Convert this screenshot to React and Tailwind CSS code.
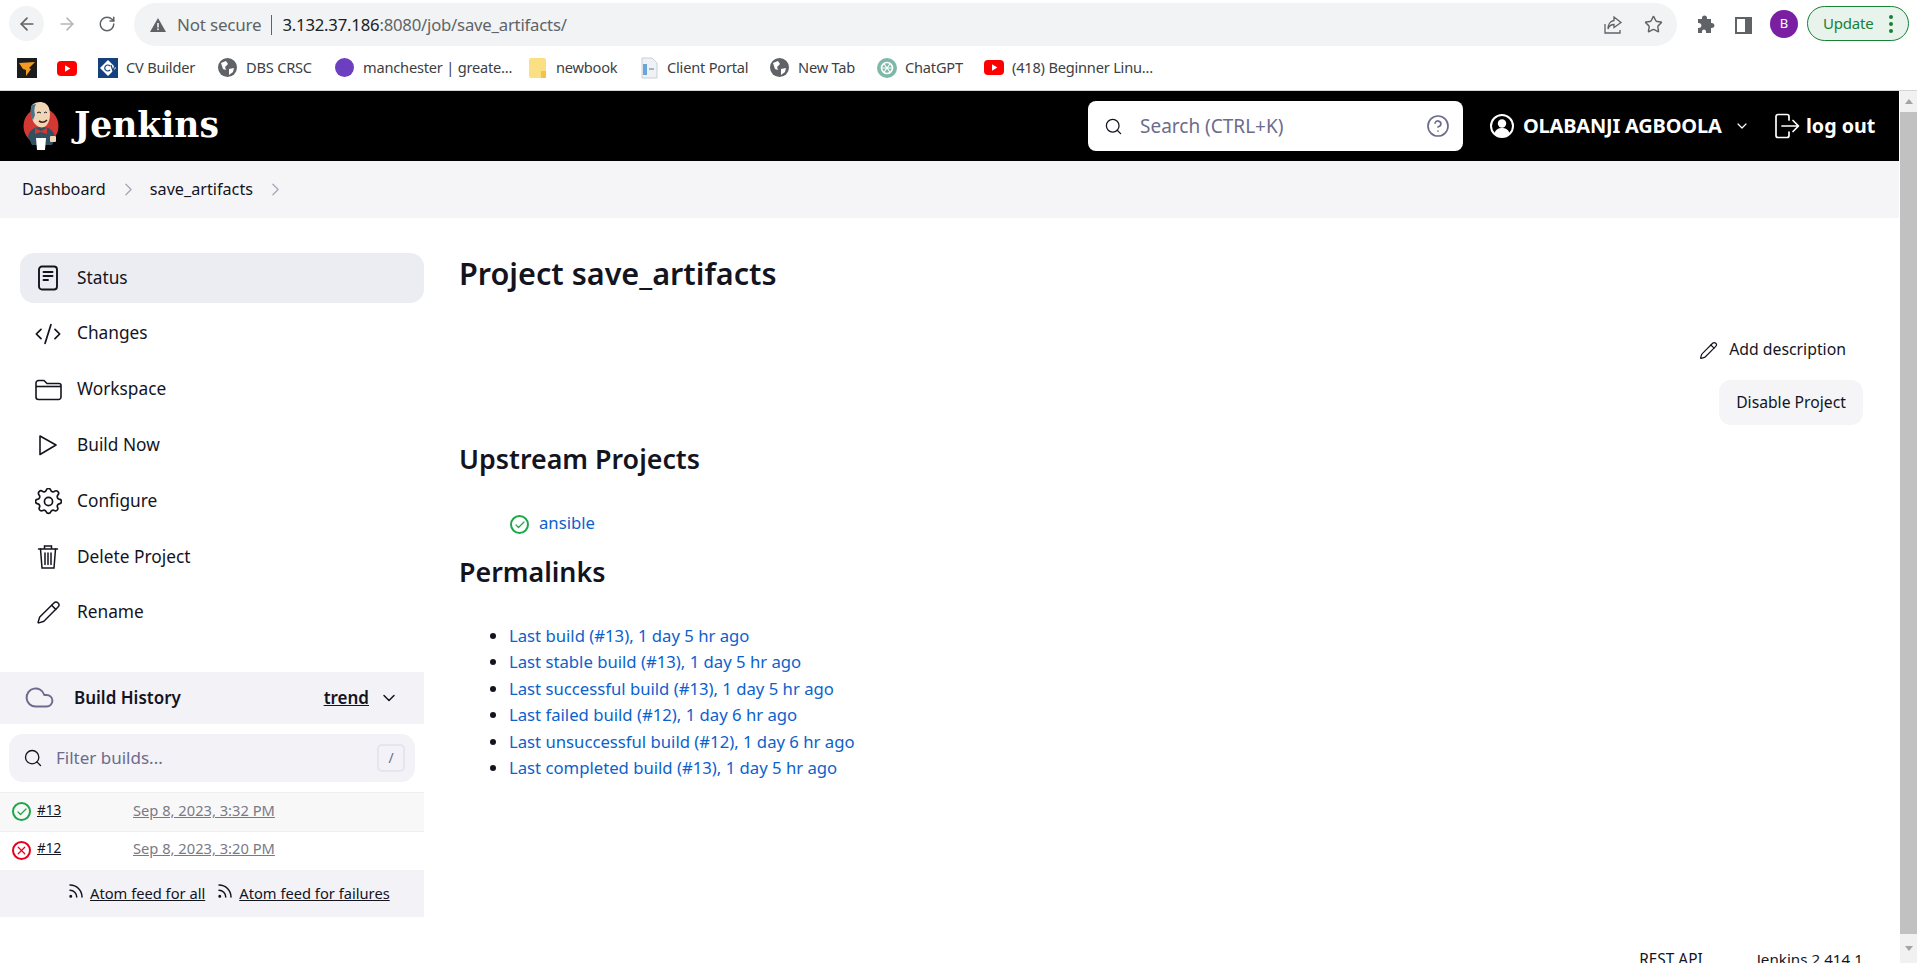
import { ArrowLeft, ArrowRight, RotateCw, Star, Search, ChevronDown, ChevronRight, Rss, Check, X, Pencil, Cloud, CodeXml, CircleHelp } from 'lucide-react';

const sans = 'font-["Noto_Sans",sans-serif]';

function JenkinsLogo() {
  return (
    <svg width="38" height="50" viewBox="0 0 38 50" className="shrink-0">
      <ellipse cx="19" cy="25" rx="17.5" ry="18" fill="#d33833" />
      <path d="M6 36 C7 29 12 26 19 26 C27 26 32 29 33 37 L30 44 H10 Z" fill="#335061" />
      <path d="M10 4 C15 -1 25 0 27 7 C29 13 28 21 24 25 C20 28 14 26 11 20 C9 15 8 8 10 4 Z" fill="#f0d6b7" />
      <path d="M10 4 C8 8 8 15 11 19 L13 14 C12 10 12 7 14 3 Z" fill="#49728b" />
      <path d="M15 12 q2 -2 4 0 M22 12 q2 -2 3 0" stroke="#1a1a1a" strokeWidth="1" fill="none" />
      <path d="M17 20 q4 3 8 -1" stroke="#49230f" strokeWidth="1.6" fill="none" />
      <path d="M13 27 L19 30 L25 27 L25 33 L19 31 L13 33 Z" fill="#d33833" />
      <path d="M14 37 H24 L23 49 H15 Z" fill="#fff" />
      <rect x="28" y="35" width="6" height="6" rx="1" fill="#f0d6b7" />
    </svg>
  );
}

function Bookmark({ icon, label, width }) {
  return (
    <div className={`flex items-center ${width}`}>
      <span className="flex w-[21px] shrink-0 justify-center">{icon}</span>
      <span className="ml-[8px] whitespace-nowrap text-[14.6px] tracking-[-0.2px] text-[#3c4043]">{label}</span>
    </div>
  );
}

function YoutubeIcon() {
  return (
    <svg width="20" height="15" viewBox="0 0 20 15">
      <rect width="20" height="15" rx="4" fill="#f00" />
      <path d="M8 4.2 L13.4 7.5 L8 10.8 Z" fill="#fff" />
    </svg>
  );
}

function GlobeIcon() {
  return (
    <svg width="19" height="19" viewBox="0 0 19 19">
      <circle cx="9.5" cy="9.5" r="9.5" fill="#5f6368" />
      <path d="M3 5 L8 3 L10 6 L7 9 L8 12 L5 11 Z M11 11 L16 10 L15 14 L11 17 Z" fill="#fff" />
    </svg>
  );
}

function BrowserBars() {
  return (
    <>
      <div className="flex h-[46px] shrink-0 items-start bg-white pt-[3px]">
        <div className="ml-[9px] mt-[3px] flex h-[35px] w-[35px] items-center justify-center rounded-full bg-[#f1f3f4]">
          <ArrowLeft size={20} strokeWidth={2} className="text-[#5f6368]" />
        </div>
        <div className="ml-[5px] mt-[3px] flex h-[35px] w-[35px] items-center justify-center">
          <ArrowRight size={20} strokeWidth={2} className="text-[#b5b7b9]" />
        </div>
        <div className="ml-[5px] mt-[3px] flex h-[35px] w-[35px] items-center justify-center">
          <RotateCw size={18} strokeWidth={2} className="text-[#5f6368]" />
        </div>
        <div className="ml-[10px] flex h-[43px] w-[1543px] items-center rounded-full bg-[#f1f3f4] pl-[16px] pr-[14px]">
          <svg width="16" height="14" viewBox="0 0 16 14"><path d="M8 0 L16 14 H0 Z" fill="#5f6368" /><rect x="7.2" y="5" width="1.6" height="4.5" fill="#f1f3f4" /><rect x="7.2" y="10.5" width="1.6" height="1.6" fill="#f1f3f4" /></svg>
          <span className="ml-[11px] whitespace-nowrap text-[17px] tracking-[-0.2px] text-[#5f6368]">Not secure</span>
          <span className="ml-[10px] h-[20px] w-px bg-[#5f6368]" />
          <span className="ml-[10px] whitespace-nowrap text-[16.7px] tracking-[-0.2px] text-[#202124]">
            3.132.37.186<span className="text-[#5f6368]">:8080/job/save_artifacts/</span>
          </span>
          <span className="flex-1" />
          <svg width="20" height="20" viewBox="0 0 20 20" fill="none" stroke="#5f6368" strokeWidth="1.3">
            <path d="M2 9 V18 H17 V15" />
            <path d="M11 2 L18 7.5 L11 12.5 V9.5 C8 9.5 6 11 5 14 C5 10 7 6 11 5.5 Z" />
          </svg>
          <Star size={19} strokeWidth={1.8} className="ml-[21px] text-[#5f6368]" />
        </div>
        <svg width="20" height="20" viewBox="0 0 20 20" className="ml-[18px] mt-[11px]" fill="#5f6368">
          <path d="M3 5 H7 V4 a2.5 2.5 0 0 1 5 0 V5 H16 V9 H17 a2.5 2.5 0 0 1 0 5 H16 V19 H11 V17.5 a2 2 0 0 0 -4 0 V19 H3 V14 H4 a2.5 2.5 0 0 0 0 -5 H3 Z" />
        </svg>
        <div className="ml-[20px] mt-[14px] h-[17px] w-[17px] border-[2.5px] border-[#5f6368] border-r-[7px]" />
        <div className="ml-[18px] mt-[7px] flex h-[28px] w-[28px] items-center justify-center rounded-full bg-[#7b1fa2] text-[13px] text-white">B</div>
        <div className="ml-[9px] mt-[3px] flex h-[35px] w-[102px] items-center rounded-full border border-[#188038] bg-[#e8f3ec] pl-[15px]">
          <span className="text-[15px] tracking-[-0.2px] text-[#188038]">Update</span>
          <span className="ml-[15px] flex flex-col gap-[3px]">
            <span className="h-[4px] w-[4px] rounded-full bg-[#188038]" />
            <span className="h-[4px] w-[4px] rounded-full bg-[#188038]" />
            <span className="h-[4px] w-[4px] rounded-full bg-[#188038]" />
          </span>
        </div>
      </div>
      <div className="flex h-[45px] shrink-0 items-center border-b border-[#d5d5d5] bg-white pl-[17px]">
        <div className="flex w-[40px] items-center">
          <svg width="20" height="20" viewBox="0 0 20 20"><rect width="20" height="20" fill="#1c1c1c" /><path d="M2 5 L18 4 L12 10 L14 11 L9 18 L9 12 L6 11 Z" fill="#f59a23" /></svg>
        </div>
        <div className="flex w-[40px] items-center"><YoutubeIcon /></div>
        <Bookmark
          width="w-[120px]"
          label="CV Builder"
          icon={
            <svg width="20" height="20" viewBox="0 0 20 20">
              <rect width="20" height="20" fill="#15407e" />
              <path d="M10 2 L18 10 L10 18 L2 10 Z" fill="#fff" />
              <path d="M12 8 a3 3 0 1 0 0 4 M13 7 L15 13 L17 7" stroke="#15407e" fill="none" strokeWidth="1.2" />
            </svg>
          }
        />
        <Bookmark width="w-[117px]" label="DBS CRSC" icon={<GlobeIcon />} />
        <Bookmark width="w-[193px]" label="manchester | greate..." icon={<span className="h-[19px] w-[19px] rounded-full bg-[#6c3fc0]" />} />
        <Bookmark
          width="w-[111px]"
          label="newbook"
          icon={
            <svg width="17" height="20" viewBox="0 0 17 20">
              <rect width="17" height="20" rx="2" fill="#fbe083" />
              <rect x="12" y="13" width="5" height="7" fill="#f4c542" />
            </svg>
          }
        />
        <Bookmark
          width="w-[131px]"
          label="Client Portal"
          icon={
            <svg width="20" height="22" viewBox="0 0 20 22">
              <path d="M3 1 H13 L18 6 V21 H3 Z" fill="#eef1f5" stroke="#c9ced6" />
              <rect x="4" y="7" width="4" height="11" fill="#6aa5da" />
              <rect x="10" y="11" width="5" height="2" fill="#a9b2bd" />
            </svg>
          }
        />
        <Bookmark width="w-[107px]" label="New Tab" icon={<GlobeIcon />} />
        <Bookmark
          width="w-[107px]"
          label="ChatGPT"
          icon={
            <svg width="20" height="20" viewBox="0 0 20 20" fill="none">
              <circle cx="10" cy="10" r="10" fill="#7fb8a8" />
              <circle cx="10" cy="10" r="5.5" stroke="#fff" strokeWidth="1.6" />
              <path d="M7 6 L13 14 M13 6 L7 14 M4.5 10 H15.5" stroke="#fff" strokeWidth="1.2" />
            </svg>
          }
        />
        <Bookmark width="w-[180px]" label="(418) Beginner Linu..." icon={<YoutubeIcon />} />
      </div>
    </>
  );
}

function Header() {
  return (
    <header className="flex h-[70px] shrink-0 items-center bg-black pl-[22px] text-white">
      <JenkinsLogo />
      <span className='-mt-[1px] ml-[14px] w-[146px] font-["DejaVu_Serif",serif] text-[34.5px] font-bold leading-none'>Jenkins</span>
      <div className="ml-[868px] flex h-[50px] w-[375px] items-center rounded-[8px] bg-white pl-[16px] pr-[13px]">
        <Search size={19} strokeWidth={1.6} className="text-[#14141f]" />
        <span className="ml-[17px] flex-1 text-[19px] text-[#6d6b8d]">Search (CTRL+K)</span>
        <CircleHelp size={24} strokeWidth={1.7} className="text-[#6d6b8d]" />
      </div>
      <svg width="24" height="24" viewBox="0 0 24 24" className="ml-[27px]">
        <circle cx="12" cy="12" r="11" fill="none" stroke="#fff" strokeWidth="2" />
        <circle cx="12" cy="9.5" r="4.2" fill="#fff" />
        <path d="M4.5 19 C6 15 9 14 12 14 C15 14 18 15 19.5 19 C17.5 22 14.5 23 12 23 C9.5 23 6.5 22 4.5 19 Z" fill="#fff" />
      </svg>
      <span className="ml-[9px] w-[200px] whitespace-nowrap text-[20px] font-bold tracking-[-0.2px]">OLABANJI AGBOOLA</span>
      <ChevronDown size={16} strokeWidth={1.8} className="ml-[11px]" />
      <svg width="26" height="26" viewBox="0 0 26 26" fill="none" stroke="#fff" strokeWidth="1.7" strokeLinecap="round" strokeLinejoin="round" className="ml-[24px]">
        <path d="M15 7 V3.5 a2 2 0 0 0 -2 -2 H4 a2 2 0 0 0 -2 2 V22.5 a2 2 0 0 0 2 2 H13 a2 2 0 0 0 2 -2 V19" />
        <path d="M8 13 H24 M19 7.5 L24.5 13 L19 18.5" />
      </svg>
      <span className="ml-[6px] whitespace-nowrap text-[19.7px] font-bold">log out</span>
    </header>
  );
}

function Breadcrumbs() {
  return (
    <div className="flex h-[57px] shrink-0 items-center bg-[#f5f5f8] pl-[22px] text-[16.2px] text-[#14141f]">
      <span>Dashboard</span>
      <ChevronRight size={21} strokeWidth={1.4} className="ml-[12px] text-[#a4a4b4]" />
      <span className="ml-[11px]">save_artifacts</span>
      <ChevronRight size={21} strokeWidth={1.4} className="ml-[12px] text-[#a4a4b4]" />
    </div>
  );
}

const navItems = [
  {
    label: 'Status',
    active: true,
    icon: (
      <svg width="26" height="26" viewBox="0 0 26 26" fill="none" stroke="#14141f" strokeWidth="1.9" strokeLinecap="round">
        <rect x="4" y="1.5" width="18" height="23" rx="3" />
        <path d="M8.5 7 H17.5 M8.5 11 H17.5 M8.5 15 H13" />
      </svg>
    ),
  },
  { label: 'Changes', icon: <CodeXml size={28} strokeWidth={1.5} /> },
  {
    label: 'Workspace',
    icon: (
      <svg width="27" height="22" viewBox="0 0 27 22" fill="none" stroke="#14141f" strokeWidth="1.6" strokeLinejoin="round">
        <path d="M1 4 a2.5 2.5 0 0 1 2.5 -2.5 H9 L12 4.5 H24 a2 2 0 0 1 2 2 V18 a2.5 2.5 0 0 1 -2.5 2.5 H3.5 A2.5 2.5 0 0 1 1 18 Z" />
        <path d="M1 7.5 H26" />
      </svg>
    ),
  },
  {
    label: 'Build Now',
    icon: (
      <svg width="20" height="22" viewBox="0 0 20 22" fill="none" stroke="#14141f" strokeWidth="1.6" strokeLinejoin="round">
        <path d="M2 2 L18 11 L2 20.5 Z" />
      </svg>
    ),
  },
  {
    label: 'Configure',
    icon: (
      <svg width="27" height="27" viewBox="2 2 20 20" fill="none" stroke="#14141f" strokeWidth="1.25" strokeLinejoin="round">
        <path d="M10.3 3.6 a1.8 1.8 0 0 1 3.4 0 a1.8 1.8 0 0 0 2.6 1 a1.8 1.8 0 0 1 2.6 2.7 a1.8 1.8 0 0 0 .9 2.9 a1.8 1.8 0 0 1 0 3.6 a1.8 1.8 0 0 0 -.9 2.9 a1.8 1.8 0 0 1 -2.6 2 a1.8 1.8 0 0 0 -2.6 .9 a1.8 1.8 0 0 1 -3.4 0 a1.8 1.8 0 0 0 -2.6 -.9 a1.8 1.8 0 0 1 -2.6 -2 a1.8 1.8 0 0 0 -.9 -2.9 a1.8 1.8 0 0 1 0 -3.6 a1.8 1.8 0 0 0 .9 -2.9 a1.8 1.8 0 0 1 2.6 -2.7 a1.8 1.8 0 0 0 2.6 -1 Z" />
        <circle cx="12" cy="12" r="3" />
      </svg>
    ),
  },
  {
    label: 'Delete Project',
    icon: (
      <svg width="22" height="26" viewBox="0 0 22 26" fill="none" stroke="#14141f" strokeWidth="1.5" strokeLinecap="round">
        <path d="M1.5 5 H20.5 M7.5 5 V2 H14.5 V5" />
        <path d="M3.5 5 L5 24 H17 L18.5 5" />
        <path d="M8 9 V20.5 M11 9 V20.5 M14 9 V20.5" />
      </svg>
    ),
  },
  { label: 'Rename', icon: <Pencil size={25} strokeWidth={1.4} /> },
];

function StatusOk() {
  return (
    <span className="flex h-[19px] w-[19px] shrink-0 items-center justify-center rounded-full border-2 border-[#1ea64a] text-[#1ea64a]">
      <Check size={12} strokeWidth={2.4} />
    </span>
  );
}

function StatusFailed() {
  return (
    <span className="flex h-[19px] w-[19px] shrink-0 items-center justify-center rounded-full border-2 border-[#e6001f] text-[#e6001f]">
      <X size={13} strokeWidth={2.4} />
    </span>
  );
}

function Sidebar() {
  return (
    <aside className="w-[424px] shrink-0 pt-[35px] text-[#14141f]">
      <nav className="flex flex-col gap-[5.8px] pl-[20px]">
        {navItems.map((item) => (
          <div
            key={item.label}
            className={`flex h-[50px] items-center rounded-[14px] ${item.active ? 'bg-[#ecedf2]' : ''}`}
          >
            <span className="flex w-[57px] shrink-0 justify-center pr-[1px]">{item.icon}</span>
            <span className="-mt-[1px] text-[17.3px]">{item.label}</span>
          </div>
        ))}
      </nav>

      <div className="mt-[34px] flex h-[52px] items-center bg-[#f2f2f7] pl-[24px] pr-[25px]">
        <Cloud size={31} strokeWidth={1.5} className="text-[#6d6b8d]" />
        <span className="-mt-[1px] ml-[19px] flex-1 text-[17px] font-semibold">Build History</span>
        <span className="-mt-[1px] text-[17px] font-semibold underline">trend</span>
        <ChevronDown size={20} strokeWidth={1.8} className="ml-[10px]" />
      </div>

      <div className="mx-[9px] mt-[10px] flex h-[48px] items-center rounded-[14px] bg-[#f2f2f7] pl-[14px] pr-[10px]">
        <Search size={20} strokeWidth={1.6} />
        <span className="ml-[13px] flex-1 text-[17px] text-[#6d6b8d]">Filter builds...</span>
        <span className="flex h-[28px] w-[28px] items-center justify-center rounded-[5px] border-2 border-[#e5e5ef] text-[14px] text-[#6d6b8d]">/</span>
      </div>

      <div className="mt-[10px] flex h-[40px] items-center border-y border-[#efeff2] bg-[#f8f8f8] pl-[12px] text-[14.7px]">
        <StatusOk />
        <span className="-mt-[3px] ml-[6px] w-[96px] text-[13.5px] underline">#13</span>
        <span className="-mt-[3px] text-[#7a7a85] underline">Sep 8, 2023, 3:32 PM</span>
      </div>
      <div className="flex h-[38px] items-center pl-[12px] text-[14.7px]">
        <StatusFailed />
        <span className="-mt-[5px] ml-[6px] w-[96px] text-[13.5px] underline">#12</span>
        <span className="-mt-[5px] text-[#7a7a85] underline">Sep 8, 2023, 3:20 PM</span>
      </div>
      <div className="flex h-[47px] items-center bg-[#f2f2f7] pl-[67px] text-[14.7px]">
        <Rss size={18} strokeWidth={2} className="-mt-[4px]" />
        <span className="ml-[5px] underline">Atom feed for all</span>
        <Rss size={18} strokeWidth={2} className="-mt-[4px] ml-[11px]" />
        <span className="ml-[5px] underline">Atom feed for failures</span>
      </div>
    </aside>
  );
}

const permalinks = [
  'Last build (#13), 1 day 5 hr ago',
  'Last stable build (#13), 1 day 5 hr ago',
  'Last successful build (#13), 1 day 5 hr ago',
  'Last failed build (#12), 1 day 6 hr ago',
  'Last unsuccessful build (#12), 1 day 6 hr ago',
  'Last completed build (#13), 1 day 5 hr ago',
];

function Main() {
  return (
    <main className="relative min-w-0 flex-1 pl-[35px] pr-[36px] pt-[35px] text-[#14141f]">
      <h1 className="text-[30.6px] font-semibold leading-[40px]">Project save_artifacts</h1>
      <div className="mt-[45px] flex flex-col items-end">
        <div className="flex h-[24px] items-center pr-[17px] text-[15.8px]">
          <Pencil size={19} strokeWidth={1.5} />
          <span className="ml-[11px]">Add description</span>
        </div>
        <div className="mt-[18px] flex h-[45px] w-[144px] items-center justify-center rounded-[12px] bg-[#f5f5f8] text-[15.7px]">Disable Project</div>
      </div>
      <h2 className="mt-[16px] text-[26.8px] font-semibold leading-[36px]">Upstream Projects</h2>
      <div className="ml-[51px] mt-[33px] flex h-[26px] items-center text-[16.7px] text-[#0b62cc]">
        <span className="mt-[3px]"><StatusOk /></span>
        <span className="-mt-[1px] ml-[10px]">ansible</span>
      </div>
      <h2 className="mt-[18px] text-[26.8px] font-semibold leading-[36px]">Permalinks</h2>
      <ul className="ml-[50px] mt-[33px] flex list-disc flex-col pl-0 text-[16.7px] leading-[26.4px] text-[#0b62cc] marker:text-[#14141f]">
        {permalinks.map((link) => (
          <li key={link}>{link}</li>
        ))}
      </ul>
      <div className="absolute right-[36px] top-[730px] flex gap-[54px] text-[15.4px]">
        <span>REST API</span>
        <span className="text-[15.2px]">Jenkins 2.414.1</span>
      </div>
    </main>
  );
}

function Scrollbar() {
  return (
    <div className="flex w-[18px] shrink-0 flex-col border-l border-white bg-[#f1f1f1]">
      <div className="flex h-[21px] items-center justify-center">
        <span className="h-0 w-0 border-x-[4px] border-b-[5px] border-x-transparent border-b-[#a3a3a3]" />
      </div>
      <div className="h-[822px] bg-[#c1c1c1]" />
      <div className="flex flex-1 items-center justify-center">
        <span className="h-0 w-0 border-x-[4px] border-t-[5px] border-x-transparent border-t-[#a3a3a3]" />
      </div>
    </div>
  );
}

export default function App() {
  return (
    <div className={`flex h-[963px] w-[1917px] flex-col overflow-hidden bg-white ${sans}`}>
      <BrowserBars />
      <div className="flex min-h-0 flex-1">
        <div className="flex min-w-0 flex-1 flex-col">
          <Header />
          <Breadcrumbs />
          <div className="flex min-h-0 flex-1">
            <Sidebar />
            <Main />
          </div>
        </div>
        <Scrollbar />
      </div>
    </div>
  );
}
